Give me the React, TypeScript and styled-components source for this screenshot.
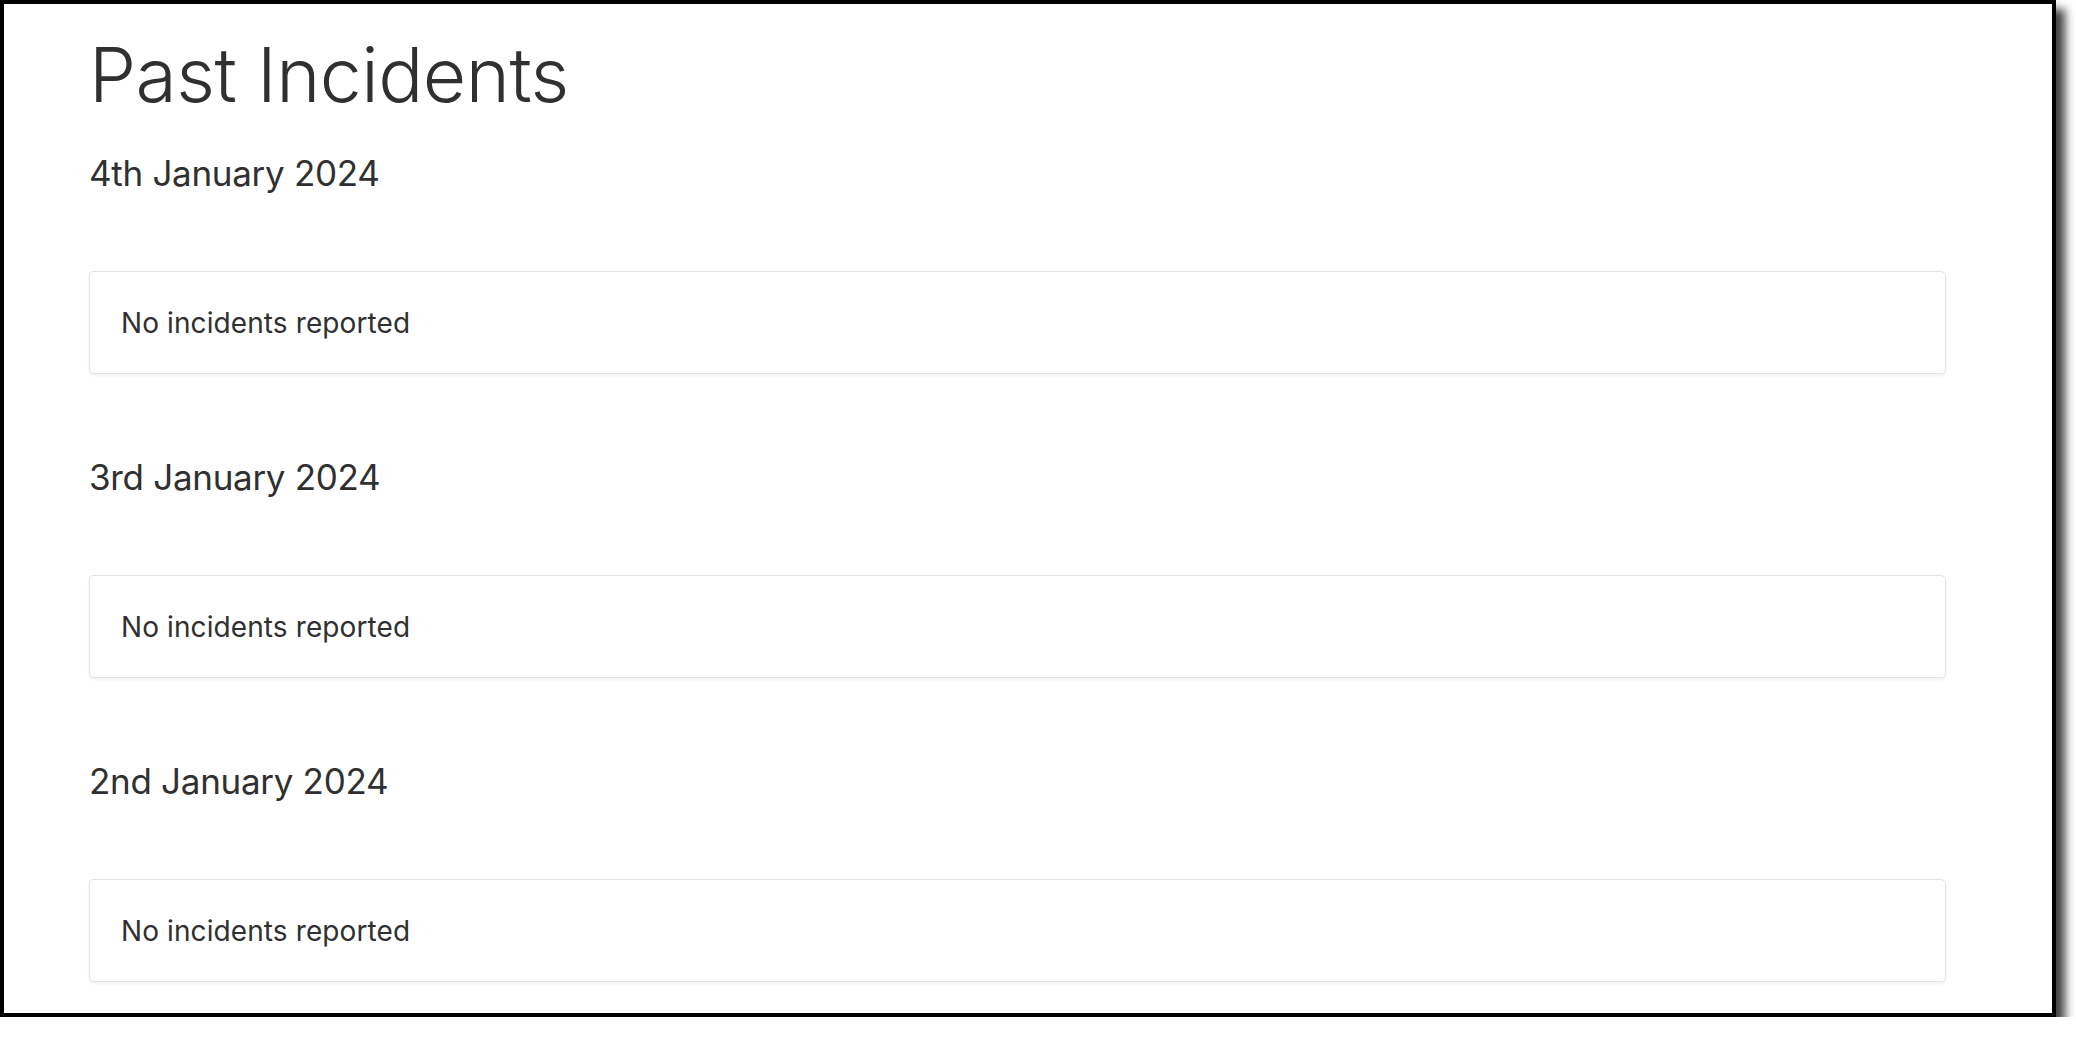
import React from "react";
import styled, { createGlobalStyle } from "styled-components";

const GlobalStyle = createGlobalStyle`
  html, body {
    margin: 0;
    padding: 0;
    background: #ffffff;
  }
  body {
    font-family: Inter, "Noto Sans", "Liberation Sans", sans-serif;
    color: #303030;
  }
`;

const Frame = styled.div`
  box-sizing: border-box;
  width: 2056px;
  height: 1017px;
  border: 4px solid #000;
  background: #fff;
  box-shadow: 9px 9px 9px rgba(0, 0, 0, 0.75);
  overflow: hidden;
`;

const Content = styled.main`
  padding: 28px 106px 0 85px;
  display: flex;
  flex-direction: column;
`;

const PageTitle = styled.h1`
  margin: 0 0 34px;
  font-size: 75px;
  line-height: 86px;
  font-weight: 300;
  letter-spacing: -0.5px;
  color: #303030;
`;

const Section = styled.section`
  display: flex;
  flex-direction: column;
  gap: 76px;
  margin-bottom: 82px;
`;

const DateTitle = styled.h3`
  margin: 0;
  font-size: 35px;
  line-height: 43px;
  font-weight: 400;
  letter-spacing: -0.3px;
  color: #303030;
`;

const Card = styled.div`
  border: 1.5px solid #e3e3e3;
  border-radius: 5px;
  box-shadow: 0 2px 3px rgba(0, 0, 0, 0.06);
  padding: 30px 31px 28px;
  font-size: 28px;
  line-height: 43px;
  letter-spacing: 0.1px;
  color: #303030;
`;

const days = ["4th January 2024", "3rd January 2024", "2nd January 2024"];

export default function App() {
  return (
    <>
      <GlobalStyle />
      <Frame>
        <Content>
          <PageTitle>Past Incidents</PageTitle>
          {days.map((d) => (
            <Section key={d}>
              <DateTitle>{d}</DateTitle>
              <Card>No incidents reported</Card>
            </Section>
          ))}
        </Content>
      </Frame>
    </>
  );
}
